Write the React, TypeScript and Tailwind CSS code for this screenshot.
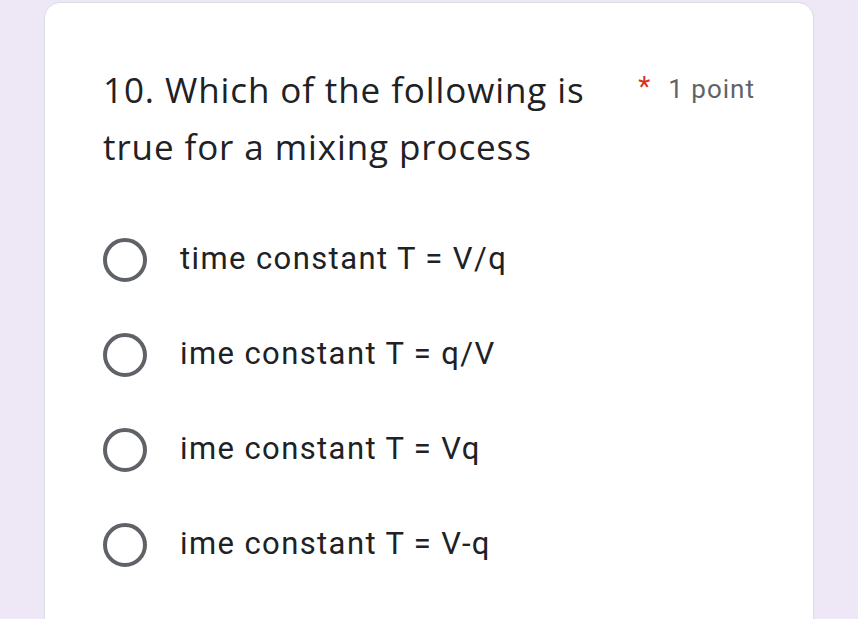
const options = [
  "time constant T = V/q",
  "ime constant T = q/V",
  "ime constant T = Vq",
  "ime constant T = V-q",
];

export default function App() {
  return (
    <div className="min-h-screen h-[619px] overflow-hidden bg-[#ede7f6] pt-[2px]" style={{ fontFamily: "Roboto, 'Liberation Sans', sans-serif" }}>
      <div className="ml-[44px] w-[770px] h-[640px] rounded-[16px] border border-[#dadce0] bg-white pl-[58px] pr-[58px] pt-[58px]">
        {/* Question header */}
        <div className="flex items-start justify-between">
          <h2 className="w-[515px] text-[35px] leading-[57px] tracking-[0.9px] text-[#202124]" style={{ fontFamily: "'Open Sans', Roboto, sans-serif" }}>
            10. Which of the following is true for a mixing process
          </h2>
          <div className="flex items-start pt-[12px]">
            <span className="text-[28px] leading-[28px] text-[#d93025] mr-[18px]">*</span>
            <span className="text-[26px] leading-[32px] tracking-[1px] text-[#5f6368]">1 point</span>
          </div>
        </div>

        {/* Options */}
        <div className="mt-[37px] flex flex-col">
          {options.map((opt) => (
            <div key={opt} className="flex h-[95px] items-center">
              <div className="h-[44px] w-[44px] shrink-0 rounded-full border-[4px] border-[#5f6368]" />
              <span className="ml-[33px] text-[31px] tracking-[1.4px] text-[#202124]">{opt}</span>
            </div>
          ))}
        </div>
      </div>
    </div>
  );
}
